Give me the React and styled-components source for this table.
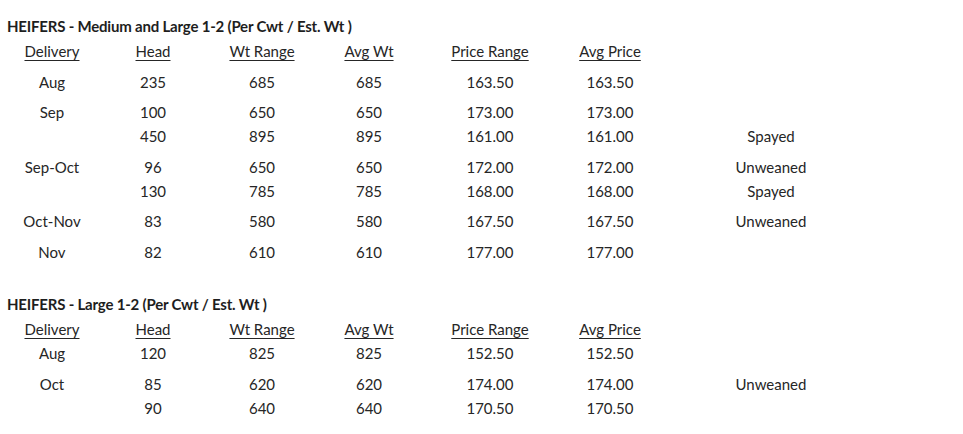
import React from "react";
import styled, { createGlobalStyle } from "styled-components";

const Global = createGlobalStyle`
  html, body { margin: 0; padding: 0; background: #ffffff; }
  body { font-family: Lato, "Open Sans", "Liberation Sans", sans-serif; color: #262626; }
`;

const Page = styled.div`
  width: 963px;
  height: 434px;
  padding: 16px 0 0 0;
  box-sizing: border-box;
  overflow: hidden;
`;

const Section = styled.section`
  margin-top: ${(p) => p.$top || 0}px;
`;

const Title = styled.h2`
  margin: 0 0 3px 7px;
  font-size: 15px;
  line-height: 20px;
  font-weight: 700;
  letter-spacing: -0.2px;
  color: #1e1e1e;
`;

const Row = styled.div`
  display: grid;
  grid-template-columns: 104px 98px 120px 94px 148px 92px 230px;
  height: 24px;
  line-height: 24px;
  font-size: 15px;
  margin-top: ${(p) => p.$gap || 0}px;
`;

const Cell = styled.div`
  text-align: center;
  white-space: nowrap;
`;

const HeadCell = styled(Cell)`
  text-decoration: underline;
  text-underline-offset: 3px;
  text-decoration-thickness: 1px;
`;

const headers = ["Delivery", "Head", "Wt Range", "Avg Wt", "Price Range", "Avg Price"];

const sections = [
  {
    title: "HEIFERS - Medium and Large 1-2 (Per Cwt / Est. Wt )",
    top: 0,
    rows: [
      { gap: 7, d: "Aug", v: ["235", "685", "685", "163.50", "163.50"], n: "" },
      { gap: 6, d: "Sep", v: ["100", "650", "650", "173.00", "173.00"], n: "" },
      { gap: 0, d: "", v: ["450", "895", "895", "161.00", "161.00"], n: "Spayed" },
      { gap: 7, d: "Sep-Oct", v: ["96", "650", "650", "172.00", "172.00"], n: "Unweaned" },
      { gap: 0, d: "", v: ["130", "785", "785", "168.00", "168.00"], n: "Spayed" },
      { gap: 6, d: "Oct-Nov", v: ["83", "580", "580", "167.50", "167.50"], n: "Unweaned" },
      { gap: 7, d: "Nov", v: ["82", "610", "610", "177.00", "177.00"], n: "" },
    ],
  },
  {
    title: "HEIFERS - Large 1-2 (Per Cwt / Est. Wt )",
    top: 30,
    rows: [
      { gap: 0, d: "Aug", v: ["120", "825", "825", "152.50", "152.50"], n: "" },
      { gap: 7, d: "Oct", v: ["85", "620", "620", "174.00", "174.00"], n: "Unweaned" },
      { gap: 0, d: "", v: ["90", "640", "640", "170.50", "170.50"], n: "" },
    ],
  },
];

export default function App() {
  return (
    <Page>
      <Global />
      {sections.map((s) => (
        <Section key={s.title} $top={s.top}>
          <Title>{s.title}</Title>
          <Row>
            {headers.map((h) => (
              <HeadCell key={h}>{h}</HeadCell>
            ))}
            <Cell />
          </Row>
          {s.rows.map((r, i) => (
            <Row key={i} $gap={r.gap}>
              <Cell>{r.d}</Cell>
              {r.v.map((x, j) => (
                <Cell key={j}>{x}</Cell>
              ))}
              <Cell>{r.n}</Cell>
            </Row>
          ))}
        </Section>
      ))}
    </Page>
  );
}
